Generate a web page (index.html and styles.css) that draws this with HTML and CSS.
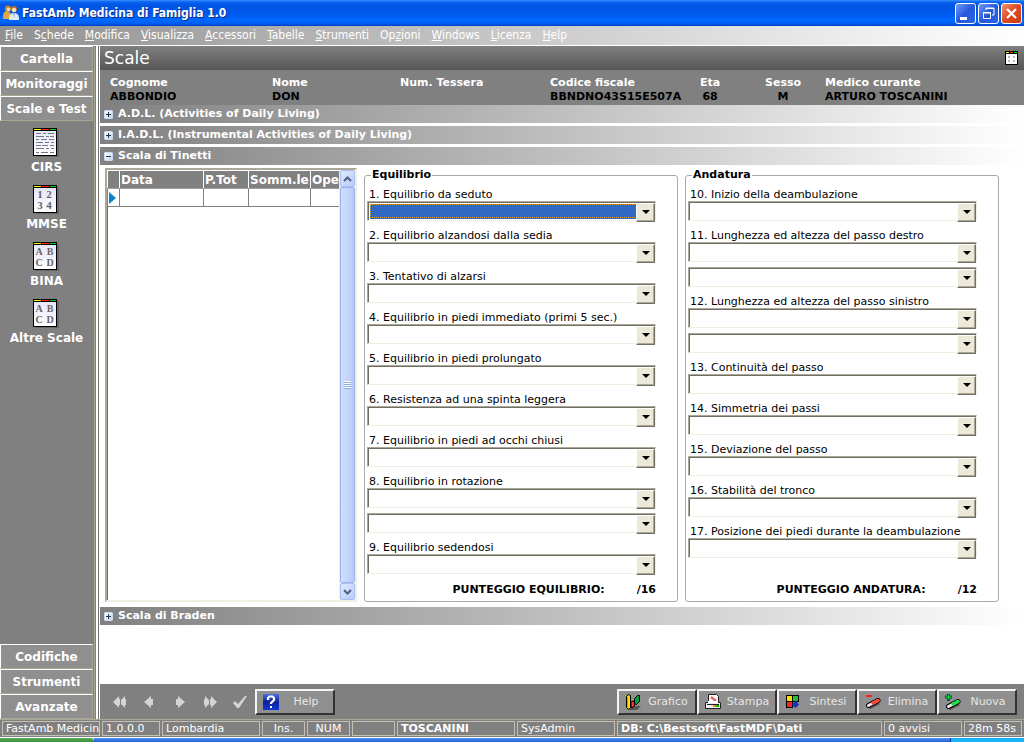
FILE: index.html
```html
<!DOCTYPE html>
<html lang="it">
<head>
<meta charset="utf-8">
<title>FastAmb Medicina di Famiglia 1.0</title>
<link rel="stylesheet" href="styles.css">
</head>
<body>
<svg class="defs" aria-hidden="true">
  <defs>
    <linearGradient id="paper" x1="0" y1="0" x2="0" y2="1"><stop offset="0" stop-color="#e6e6fa"/><stop offset="1" stop-color="#fff"/></linearGradient>
    <linearGradient id="qblue" x1="0" y1="0" x2="0" y2="1"><stop offset="0" stop-color="#4a6fe0"/><stop offset=".5" stop-color="#0a1f9c"/><stop offset="1" stop-color="#1238d8"/></linearGradient>
    <symbol id="sheet" viewBox="0 0 27 29">
      <g shape-rendering="crispEdges">
        <path d="M3 2h23v27H3z" fill="#6a666a"/>
        <path d="M0 0h24v28H0z"/>
        <path d="M1 3h22v24H1z" fill="url(#paper)"/>
        <path d="M1 1h7v1H1z" fill="#ff0"/><path d="M9 1h7v1H9z" fill="#f22"/><path d="M17 1h6v1h-6z" fill="#0d0"/>
      </g>
    </symbol>
  </defs>
</svg>

<header class="titlebar">
  <svg class="app-icon" width="16" height="16" viewBox="0 0 16 16" aria-hidden="true">
    <path d="M0 14c0-6 1-8 4-8s4 2 5 8z" fill="#e0a83c"/><circle cx="5" cy="3.500" r="3" fill="#c98a30"/><circle cx="5.500" cy="4.500" r="1.800" fill="#f8d9a8"/>
    <circle cx="11" cy="4" r="3" fill="#b5762a"/><circle cx="11" cy="5" r="2.200" fill="#fbe3bb"/><path d="M6 15c0-5 1-7 5-7s5 2 5 7z" fill="#dfeaf8"/><path d="M10 8h2l-1 5z" fill="#8fb1dd"/>
  </svg>
  <h1 class="titlebar-text">FastAmb Medicina di Famiglia 1.0</h1>
  <div class="window-buttons">
    <button class="win-btn" aria-label="Riduci a icona"><svg width="19" height="19" viewBox="0 0 19 19"><path d="M4 13h7v3H4z" fill="#fff"/></svg></button>
    <button class="win-btn" aria-label="Ripristina"><svg width="19" height="19" viewBox="0 0 19 19"><path d="M7 6V4h8v7h-2M7 4.500h8M4.500 8.500h7v6h-7zM4 9h8" fill="none" stroke="#fff"/></svg></button>
    <button class="win-btn win-close" aria-label="Chiudi"><svg width="19" height="19" viewBox="0 0 19 19"><path d="M5 5l9 9M14 5l-9 9" stroke="#fff" stroke-width="2.200"/></svg></button>
  </div>
</header>

<nav class="menubar" aria-label="Menu">
  <button><u>F</u>ile</button><button>S<u>c</u>hede</button><button><u>M</u>odifica</button><button><u>V</u>isualizza</button><button><u>A</u>ccessori</button><button><u>T</u>abelle</button><button><u>S</u>trumenti</button><button>Op<u>z</u>ioni</button><button><u>W</u>indows</button><button><u>L</u>icenza</button><button><u>H</u>elp</button>
</nav>

<div class="workspace">
  <aside class="sidebar">
    <div class="sidebar-inner">
      <button class="side-group">Cartella</button>
      <button class="side-group">Monitoraggi</button>
      <button class="side-group">Scale e Test</button>
      <div class="side-items">
        <button class="side-item">
          <svg width="27" height="29" viewBox="0 0 27 29"><use href="#sheet"/><path d="M3 5.500h5m2 0h3m2 0h6M3 8.500h8m2 0h3m1 0h4M3 11.500h3m2 0h6m2 0h5M3 14.500h7m2 0h4m2 0h3M3 17.500h5m1 0h6m2 0h4M3 20.500h8m2 0h3m2 0h3M3 24.500h3m2 0h7m2 0h4" stroke="#77778a" fill="none"/></svg>
          CIRS</button>
        <button class="side-item">
          <svg width="27" height="29" viewBox="0 0 27 29"><use href="#sheet"/><g class="sheet-digits"><text x="7" y="13">1</text><text x="16" y="13">2</text><text x="7" y="24">3</text><text x="16" y="24">4</text></g></svg>
          MMSE</button>
        <button class="side-item">
          <svg width="27" height="29" viewBox="0 0 27 29"><use href="#sheet"/><g class="sheet-letters"><text x="6" y="13">A</text><text x="17" y="13">B</text><text x="6" y="24">C</text><text x="17" y="24">D</text></g></svg>
          BINA</button>
        <button class="side-item">
          <svg width="27" height="29" viewBox="0 0 27 29"><use href="#sheet"/><g class="sheet-letters"><text x="6" y="13">A</text><text x="17" y="13">B</text><text x="6" y="24">C</text><text x="17" y="24">D</text></g></svg>
          Altre Scale</button>
      </div>
      <button class="side-group">Codifiche</button>
      <button class="side-group">Strumenti</button>
      <button class="side-group">Avanzate</button>
    </div>
  </aside>

  <main class="content">
    <div class="page-title">
      <h2>Scale</h2>
      <svg width="14" height="15" viewBox="0 0 14 15" shape-rendering="crispEdges" aria-hidden="true"><path d="M0 0h13v14H0z"/><path d="M1 3h11v10H1z" fill="#fff"/><path d="M1 1h3v1H1z" fill="#ff0"/><path d="M5 1h3v1H5z" fill="#f22"/><path d="M9 1h3v1H9z" fill="#0d0"/><path d="M3 5h2v2H3zM8 5h2v2H8zM3 9h2v2H3zM8 9h2v2H8z" fill="#bbb"/></svg>
    </div>

    <dl class="patient">
      <div><dt>Cognome</dt><dd>ABBONDIO</dd></div>
      <div><dt>Nome</dt><dd>DON</dd></div>
      <div><dt>Num. Tessera</dt><dd></dd></div>
      <div><dt>Codice fiscale</dt><dd>BBNDNO43S15E507A</dd></div>
      <div class="centered"><dt>Eta</dt><dd>68</dd></div>
      <div class="centered"><dt>Sesso</dt><dd>M</dd></div>
      <div><dt>Medico curante</dt><dd>ARTURO TOSCANINI</dd></div>
    </dl>

    <div class="accordion">
      <button class="section-bar" aria-expanded="false"><span class="toggle plus"></span>A.D.L. (Activities of Daily Living)</button>
      <button class="section-bar" aria-expanded="false"><span class="toggle plus"></span>I.A.D.L. (Instrumental Activities of Daily Living)</button>
      <button class="section-bar" aria-expanded="true"><span class="toggle"></span>Scala di Tinetti</button>
      <div class="tinetti">
        <div class="history">
          <div class="history-table">
            <table>
              <colgroup><col class="col-mark"><col class="col-data"><col class="col-tot"><col class="col-somm"><col class="col-ope"></colgroup>
              <thead><tr><th></th><th>Data</th><th>P.Tot</th><th>Somm.le</th><th>Ope</th></tr></thead>
              <tbody><tr><td class="mark"><svg width="7" height="12" viewBox="0 0 7 12"><path d="M0 0l7 6-7 6z" fill="#0a84c8"/></svg></td><td></td><td></td><td></td><td></td></tr></tbody>
            </table>
          </div>
          <div class="scrollbar">
            <button aria-label="Scorri su"><svg width="9" height="6" viewBox="0 0 9 6"><path d="M1 5l3.500-3.500L8 5" fill="none" stroke="#4d6185" stroke-width="2"/></svg></button>
            <div class="thumb"><span class="grip"></span></div>
            <button aria-label="Scorri giù"><svg width="9" height="6" viewBox="0 0 9 6"><path d="M1 1l3.500 3.500L8 1" fill="none" stroke="#4d6185" stroke-width="2"/></svg></button>
          </div>
        </div>

        <fieldset class="scale-group">
          <legend>Equilibrio</legend>
          <div class="field"><label for="q1">1. Equilibrio da seduto</label><span class="combo focused"><select id="q1"><option></option></select></span></div>
          <div class="field"><label for="q2">2. Equilibrio alzandosi dalla sedia</label><span class="combo"><select id="q2"><option></option></select></span></div>
          <div class="field"><label for="q3">3. Tentativo di alzarsi</label><span class="combo"><select id="q3"><option></option></select></span></div>
          <div class="field"><label for="q4">4. Equilibrio in piedi immediato (primi 5 sec.)</label><span class="combo"><select id="q4"><option></option></select></span></div>
          <div class="field"><label for="q5">5. Equilibrio in piedi prolungato</label><span class="combo"><select id="q5"><option></option></select></span></div>
          <div class="field"><label for="q6">6. Resistenza ad una spinta leggera</label><span class="combo"><select id="q6"><option></option></select></span></div>
          <div class="field"><label for="q7">7. Equilibrio in piedi ad occhi chiusi</label><span class="combo"><select id="q7"><option></option></select></span></div>
          <div class="field"><label for="q8">8. Equilibrio in rotazione</label><span class="combo"><select id="q8"><option></option></select></span><span class="combo"><select aria-label="8. Equilibrio in rotazione, seconda voce"><option></option></select></span></div>
          <div class="field"><label for="q9">9. Equilibrio sedendosi</label><span class="combo"><select id="q9"><option></option></select></span></div>
          <p class="score"><span>PUNTEGGIO EQUILIBRIO:</span><span>/16</span></p>
        </fieldset>

        <fieldset class="scale-group">
          <legend>Andatura</legend>
          <div class="field"><label for="q10">10. Inizio della deambulazione</label><span class="combo"><select id="q10"><option></option></select></span></div>
          <div class="field"><label for="q11">11. Lunghezza ed altezza del passo destro</label><span class="combo"><select id="q11"><option></option></select></span><span class="combo"><select aria-label="11. Lunghezza ed altezza del passo destro, seconda voce"><option></option></select></span></div>
          <div class="field"><label for="q12">12. Lunghezza ed altezza del passo sinistro</label><span class="combo"><select id="q12"><option></option></select></span><span class="combo"><select aria-label="12. Lunghezza ed altezza del passo sinistro, seconda voce"><option></option></select></span></div>
          <div class="field"><label for="q13">13. Continuità del passo</label><span class="combo"><select id="q13"><option></option></select></span></div>
          <div class="field"><label for="q14">14. Simmetria dei passi</label><span class="combo"><select id="q14"><option></option></select></span></div>
          <div class="field"><label for="q15">15. Deviazione del passo</label><span class="combo"><select id="q15"><option></option></select></span></div>
          <div class="field"><label for="q16">16. Stabilità del tronco</label><span class="combo"><select id="q16"><option></option></select></span></div>
          <div class="field"><label for="q17">17. Posizione dei piedi durante la deambulazione</label><span class="combo"><select id="q17"><option></option></select></span></div>
          <p class="score"><span>PUNTEGGIO ANDATURA:</span><span>/12</span></p>
        </fieldset>
      </div>
      <button class="section-bar" aria-expanded="false"><span class="toggle plus"></span>Scala di Braden</button>
    </div>

    <div class="toolbar">
      <div class="record-nav">
        <button aria-label="Primo"><svg width="14" height="12" viewBox="0 0 14 12"><path d="M6 0v3h1v6H6v3L0 6zM12 0v3h1v6h-1v3L8 8V4z"/></svg></button>
        <button aria-label="Precedente"><svg width="14" height="12" viewBox="0 0 14 12"><path d="M8 0v3h2v6H8v3L1 6z"/></svg></button>
        <button aria-label="Successivo"><svg width="14" height="12" viewBox="0 0 14 12"><path d="M5 0v3H3v6h2v3l7-6z"/></svg></button>
        <button aria-label="Ultimo"><svg width="14" height="12" viewBox="0 0 14 12"><path d="M8 0v3H7v6h1v3l6-6zM2 0v3H1v6h1v3l4-4V4z"/></svg></button>
        <button aria-label="Conferma"><svg width="14" height="12" viewBox="0 0 14 12"><path d="M0 7l2-2 3 3 7-8h2L6 12H4z"/></svg></button>
      </div>
      <button class="tool-btn">
        <svg width="16" height="16" viewBox="0 0 16 16"><path d="M0 0h16v16H0z" fill="url(#qblue)"/><path d="M5 6V4l1.500-1.500h3L11 4v2L8 9v1" fill="none" stroke="#fff" stroke-width="2.200"/><path d="M7 12h2v2H7z" fill="#fff"/></svg>
        <span>Help</span></button>
      <div class="actions">
        <button class="tool-btn">
          <svg width="16" height="16" viewBox="0 0 16 16"><path d="M4 16l4-4h8l-4 4z" fill="#555"/><path d="M6 8l3-1 1 4-3 3-1-1z" fill="#f33" stroke="#000"/><path d="M9.500 4.500l3-3h2v6l-3 3-2-1z" fill="#0a9a40" stroke="#000"/><path d="M1.500 2.500l1.500-2 2.500 1v12l-1.500 2-2.500-2z" fill="#fd0" stroke="#000"/><path d="M2 3h1v10H2z" fill="#f80"/></svg>
          <span>Grafico</span></button>
        <button class="tool-btn">
          <svg width="16" height="16" viewBox="0 0 16 16"><path d="M3.500.500h8l2 2v7h-10z" fill="#fff" stroke="#222"/><path d="M6 3l5 4" stroke="#d66" stroke-width="2.500"/><path d="M.5 8.500h15v6H.5z" fill="#eee" stroke="#222"/><path d="M3 7h10v2H3z" fill="#fff"/><path d="M2 10h12v1H2z" fill="#222"/><path d="M8 11h3v2H8z" fill="#f80"/><path d="M11 11h3v2h-3z" fill="#0b0"/></svg>
          <span>Stampa</span></button>
        <button class="tool-btn">
          <svg width="16" height="16" viewBox="0 0 16 16"><path d="M1 1h13v13H1z"/><path d="M2 2h5v5H2z" fill="#fd0"/><path d="M8 2h5v5H8z" fill="#2b3"/><path d="M2 8h5v5H2z" fill="#f22"/><path d="M8 8h6v6H8z" fill="#8f8f8f"/><path d="M10.500 7l3.500 3.500-3.500 3.500L7 10.500z" fill="#13b"/></svg>
          <span>Sintesi</span></button>
        <button class="tool-btn">
          <svg width="16" height="16" viewBox="0 0 16 16"><path d="M1 2h6" stroke="#f22" stroke-width="2"/><path d="M4 14l10-5" stroke="#555" stroke-width="3"/><path d="M3.500 11.500L13 6.500" stroke="#000" stroke-width="5" stroke-linecap="round"/><path d="M3.500 11.500L13 6.500" stroke="#eee" stroke-width="3" stroke-linecap="round"/><path d="M8 9l5-2.500" stroke="#f43" stroke-width="3.500" stroke-linecap="round"/></svg>
          <span>Elimina</span></button>
        <button class="tool-btn">
          <svg width="16" height="16" viewBox="0 0 16 16"><path d="M0 3h7M3.500 0v7" stroke="#064" stroke-width="3"/><path d="M1 3h5M3.500 1v4" stroke="#1d3"/><path d="M4 15l10-5" stroke="#555" stroke-width="3"/><path d="M3.500 12.500L13 7.500" stroke="#000" stroke-width="5" stroke-linecap="round"/><path d="M3.500 12.500L13 7.500" stroke="#eee" stroke-width="3" stroke-linecap="round"/><path d="M8 10l5-2.500" stroke="#2d4" stroke-width="3.500" stroke-linecap="round"/></svg>
          <span>Nuova</span></button>
      </div>
    </div>
  </main>
</div>

<footer class="statusbar">
  <span>FastAmb Medicin</span><span>1.0.0.0</span><span>Lombardia</span><span class="mid">Ins.</span><span class="mid">NUM</span><span></span><span class="strong">TOSCANINI</span><span>SysAdmin</span><span class="strong">DB: C:\Bestsoft\FastMDF\Dati</span><span>0 avvisi</span><span>28m 58s</span>
</footer>
<div class="taskbar"><span class="start"></span><span class="tasks"></span><span class="tray"></span></div>
</body>
</html>
```
FILE: styles.css
```css
* { box-sizing: border-box; }

body {
  margin: 0;
  min-height: 100vh;
  display: flex;
  flex-direction: column;
  background: #fff;
  font: 11px/14px "DejaVu Sans", Verdana, sans-serif;
  color: #000;
}

button {
  margin: 0;
  padding: 0;
  border: 0;
  background: none;
  color: inherit;
  font: inherit;
}

svg { display: block; flex: none; }
h1, h2, p, dl, dd { margin: 0; }
.defs { position: absolute; width: 0; height: 0; }

/* Window title */
.titlebar {
  display: flex;
  align-items: center;
  height: 26px;
  padding: 0 2px 0 3px;
  background: linear-gradient(#3a93ff 0, #0a62f0 2px, #0054e3 6px, #0058ec 14px, #0068ff 20px, #0062f5 23px, #0040c8 26px);
}
.titlebar-text {
  flex: 1;
  margin-left: 3px;
  color: #fff;
  font: bold 12px/16px "DejaVu Sans Condensed", "DejaVu Sans", Tahoma, sans-serif;
  text-shadow: 1px 1px 0 #0b2a80;
}
.window-buttons { display: flex; gap: 2px; }
.win-btn {
  width: 21px;
  height: 21px;
  border: 1px solid #fff;
  border-radius: 3px;
  background: linear-gradient(135deg, #6f9bf5, #2558dc 50%, #2a66ea);
}
.win-close { background: linear-gradient(135deg, #f0936f, #dd4a22 50%, #c93a10); }

/* Menu */
.menubar {
  display: flex;
  gap: 11px;
  height: 20px;
  padding: 0 5px;
  border-bottom: 1px solid #fff;
  background: linear-gradient(90deg, #919191, #fff);
  color: #fff;
  font: 12px/19px "DejaVu Sans Condensed", "DejaVu Sans", Tahoma, sans-serif;
}

.workspace { flex: 1; display: flex; }

/* Sidebar */
.sidebar {
  flex: none;
  width: 100px;
  display: flex;
  background: #808080;
  border-right: 1px solid #fff;
  font-weight: bold;
  font-size: 12px;
  color: #fff;
}
.sidebar-inner {
  flex: 1;
  display: flex;
  flex-direction: column;
}
.sidebar::after {
  content: "";
  width: 6px;
  background: linear-gradient(90deg, #808080 1px, #a8a695 1px 2px, #808080 2px 3px, #fff 3px 5px, #707070 5px);
}
.side-group {
  height: 25px;
  border: 1px solid #fff;
  border-right-color: #a8a695;
  border-bottom-color: #a8a695;
  background: #8f8f8f;
}
.side-items {
  flex: 1;
  display: flex;
  flex-direction: column;
  gap: 10px;
  padding-top: 7px;
}
.side-item {
  display: flex;
  flex-direction: column;
  align-items: center;
  gap: 2px;
  line-height: 16px;
}
.sheet-digits, .sheet-letters {
  font: bold 10px "Liberation Serif", serif;
  fill: #666;
  text-anchor: middle;
}
.sheet-digits { font-size: 11px; }

/* Content */
.content {
  flex: 1;
  min-width: 0;
  display: flex;
  flex-direction: column;
}
.page-title {
  display: flex;
  align-items: center;
  justify-content: space-between;
  height: 24px;
  padding: 0 5px 0 4px;
  background: linear-gradient(#808080, #555);
  color: #fff;
}
.page-title h2 { font-size: 17px; line-height: 24px; font-weight: normal; }

.patient {
  display: grid;
  grid-template-columns: 162px 128px 150px 150px 65px 60px 1fr;
  padding: 6px 0 1px 10px;
  background: #808080;
  font-weight: bold;
}
.patient dt { color: #fff; }
.patient dd { min-height: 14px; }
.patient .centered { justify-self: start; text-align: center; }

.accordion {
  flex: 1;
  display: flex;
  flex-direction: column;
  gap: 3px;
}
.section-bar {
  display: flex;
  align-items: center;
  gap: 5px;
  height: 18px;
  padding: 0 4px;
  background: linear-gradient(90deg, #808080, #fff);
  color: #fff;
  font-weight: bold;
  text-align: left;
}
.toggle {
  width: 9px;
  height: 9px;
  background:
    linear-gradient(#234, #234) center / 5px 1px no-repeat,
    linear-gradient(135deg, #fff, #c3d3ee);
  border: 1px solid #c8d8ee;
  border-radius: 1px;
}
.toggle.plus {
  background:
    linear-gradient(#234, #234) center / 5px 1px no-repeat,
    linear-gradient(#234, #234) center / 1px 5px no-repeat,
    linear-gradient(135deg, #fff, #c3d3ee);
}

.tinetti {
  display: grid;
  grid-template-columns: 252px 1fr 1fr;
  gap: 7px;
  padding: 0 25px 2px 5px;
}

/* History grid */
.history {
  display: flex;
  border: 2px solid #716f64;
  border-color: #aca899 #f1efe2 #f1efe2 #aca899;
  box-shadow: inset 1px 1px 0 #716f64;
}
.history-table { flex: 1; min-width: 0; overflow: hidden; }
.history table {
  width: 268px;
  table-layout: fixed;
  border-collapse: collapse;
}
.col-mark { width: 12px; }
.col-data { width: 84px; }
.col-tot { width: 45px; }
.col-somm { width: 62px; }
.history th {
  height: 18px;
  padding: 0 1px;
  border: 1px solid #fff;
  border-bottom-color: #a0a0a0;
  background: #808080;
  color: #fff;
  font-size: 12px;
  text-align: left;
}
.history td {
  height: 18px;
  padding: 0;
  border: 1px solid #808080;
}
.history .mark { padding-left: 1px; background: #fff; }

.scrollbar {
  flex: none;
  display: flex;
  flex-direction: column;
  width: 16px;
  border-left: 1px solid #f1efe2;
  background: #f4f3ee;
}
.scrollbar button {
  display: grid;
  place-items: center;
  height: 17px;
  border: 1px solid #a9c0f3;
  border-radius: 2px;
  background: linear-gradient(135deg, #dfe8ff, #b8cbf9);
}
.thumb {
  flex: 1;
  display: grid;
  place-items: center;
  border: 1px solid #98b4ea;
  border-radius: 2px;
  background: linear-gradient(90deg, #d2defe, #c2d3fd 60%, #b5c8f8);
}
.grip {
  width: 7px;
  height: 8px;
  background: repeating-linear-gradient(#fff 0 1px, #8fabe4 1px 2px);
}

/* Scale groups */
.scale-group {
  display: flex;
  flex-direction: column;
  min-width: 0;
  margin: 0;
  padding: 7px 21px 4px 2px;
  border: 1px solid #a9a9a9;
  border-radius: 3px;
}
.scale-group legend {
  margin-left: 4px;
  padding: 0 1px;
  font-weight: bold;
  line-height: 14px;
}
.field {
  display: flex;
  flex-direction: column;
  margin-bottom: 9px;
}
.field label {
  padding-left: 2px;
  line-height: 12px;
  white-space: nowrap;
}
.combo {
  position: relative;
  height: 20px;
  border: 1px solid #aca899;
  border-color: #aca899 #f1efe2 #f1efe2 #aca899;
}
.combo + .combo { margin-top: 5px; }
.combo select {
  display: block;
  width: 100%;
  height: 18px;
  margin: 0;
  border: 0;
  border-top: 1px solid #716f64;
  border-left: 1px solid #716f64;
  border-radius: 0;
  background: #fff;
  appearance: none;
  font: inherit;
  outline: 0;
}
.combo::before {
  content: "";
  position: absolute;
  top: 1px;
  right: 0;
  width: 17px;
  height: 17px;
  border: 1px solid #fff;
  border-color: #fff #716f64 #716f64 #fff;
  box-shadow: inset -1px -1px 0 #aca899;
  background: #ece9d8;
  pointer-events: none;
}
.combo::after {
  content: "";
  position: absolute;
  top: 8px;
  right: 5px;
  border: 4px solid transparent;
  border-top-color: #000;
  border-bottom-width: 0;
  pointer-events: none;
}
.combo.focused select {
  padding: 1px 18px 1px 1px;
  background: #316ac5 content-box;
  outline: 1px dotted #f0a020;
  outline-offset: -3px;
}
.score {
  display: flex;
  justify-content: flex-end;
  gap: 32px;
  margin-top: auto;
  font-weight: bold;
}

/* Bottom toolbar */
.toolbar {
  display: flex;
  align-items: center;
  height: 35px;
  padding: 0 7px 0 5px;
  background: #808080;
  color: #e6e6e6;
}
.record-nav { display: flex; width: 150px; }
.record-nav button {
  flex: 1;
  display: grid;
  place-items: center;
}
.record-nav svg { fill: #d4d4d4; }
.tool-btn {
  display: flex;
  align-items: center;
  width: 80px;
  height: 26px;
  padding-left: 6px;
  border: 2px solid #333;
  border-color: #f4f4f4 #333 #333 #f4f4f4;
  background: #8f8f8f;
}
.tool-btn span { flex: 1; text-align: center; }
.actions { display: flex; margin-left: auto; }

/* Status bar */
.statusbar {
  display: grid;
  grid-template-columns: 98px 58px 98px 43px 43px 43px 118px 98px minmax(0, 1fr) 78px 58px;
  gap: 2px;
  height: 19px;
  padding: 1px 2px;
  border-top: 1px solid #aca899;
  border-bottom: 1px solid #fff;
  background: #808080;
  color: #fff;
}
.statusbar span {
  padding: 0 3px;
  border: 1px solid #c4c1b0;
  overflow: hidden;
  white-space: nowrap;
  line-height: 14px;
}
.statusbar .mid { text-align: center; }
.statusbar .strong { font-weight: bold; }

.taskbar { display: flex; height: 4px; }
.start { width: 94px; background: linear-gradient(#5cab5c, #3c8f3c); border-radius: 0 3px 0 0; }
.tasks { flex: 1; background: linear-gradient(#4a93ee, #245edb); }
.tray { width: 74px; background: #18b2f5; border-left: 1px solid #0a3c9a; }
```
